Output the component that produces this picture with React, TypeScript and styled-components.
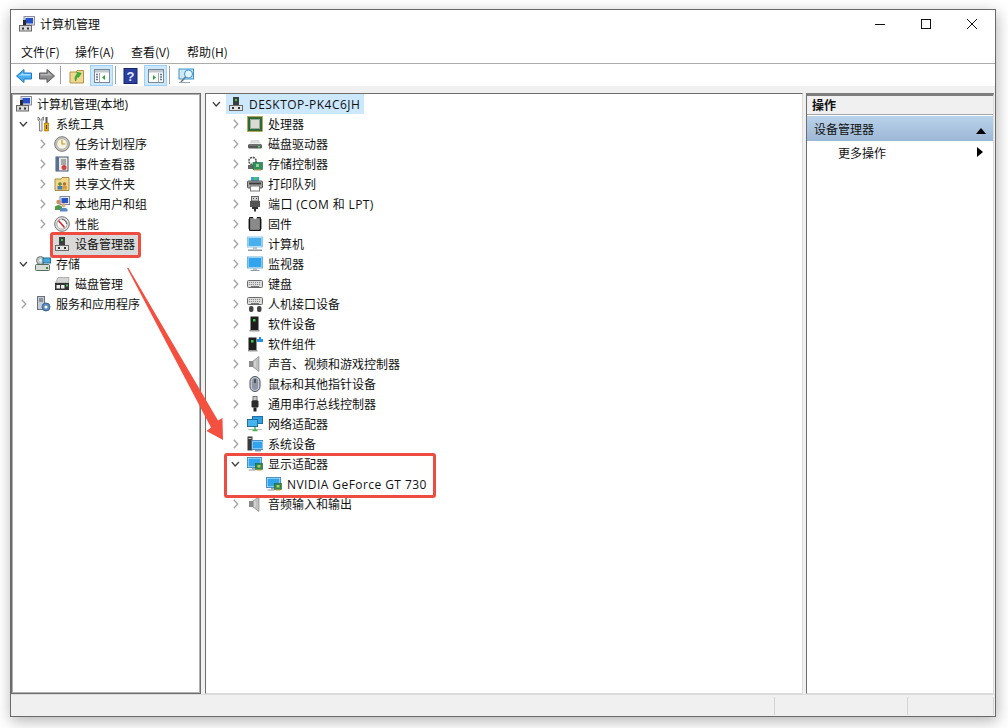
import React from "react";
import styled, { createGlobalStyle } from "styled-components";

const Global = createGlobalStyle`
  html, body { margin: 0; padding: 0; background: #fff; overflow: hidden; }
  body { font-family: "Noto Sans CJK SC", "Noto Sans", sans-serif; font-size: 12px; color: #111; }
`;

const Page = styled.div`
  position: relative;
  width: 1008px;
  height: 728px;
  padding: 9px 12px 11px 10px;
  box-sizing: border-box;
`;
const Win = styled.div`
  width: 100%;
  height: 100%;
  box-sizing: border-box;
  border: 1px solid #6a6a6a;
  background: #fff;
  display: flex;
  flex-direction: column;
  box-shadow: 1px 4px 14px rgba(0, 0, 0, 0.3);
`;
const TitleBar = styled.div`
  height: 28px;
  flex: none;
  display: flex;
  align-items: center;
  padding-left: 8px;
  box-sizing: border-box;
  gap: 5px;
`;
const TitleText = styled.span`
  flex: 1;
  line-height: 16px;
`;
const WinBtn = styled.div`
  width: 46px;
  height: 20px;
  display: flex;
  align-items: center;
  justify-content: center;
`;
const WinBtns = styled.div`
  display: flex;
`;
const MenuBar = styled.div`
  flex: none;
  height: 26px;
  box-sizing: border-box;
  border-bottom: 1px solid #ababab;
  display: flex;
  padding: 2px 0 0 10px;
  align-items: center;
`;
const MenuItem = styled.span<{ $w: number }>`
  width: ${(p) => p.$w}px;
  line-height: 16px;
`;
const ToolBar = styled.div`
  flex: none;
  height: 22px;
  display: flex;
  align-items: flex-end;
  padding-left: 1px;
`;
const ToolBtn = styled.div<{ $w?: number; $active?: boolean }>`
  width: ${(p) => p.$w ?? 23}px;
  height: 21px;
  box-sizing: border-box;
  display: flex;
  align-items: center;
  justify-content: center;
  background: ${(p) => (p.$active ? "#cce8ff" : "transparent")};
  border: 1px solid ${(p) => (p.$active ? "#99d1ff" : "transparent")};
`;
const ToolSep = styled.div`
  width: 1px;
  height: 18px;
  background: #a0a0a0;
  margin: 0 2px 2px;
`;
const Panes = styled.div`
  flex: 1;
  min-height: 0;
  background: #f0f0f0;
  padding: 7px 1px 0 0;
  display: flex;
`;
const LeftPane = styled.div`
  width: 190px;
  flex: none;
  box-sizing: border-box;
  background: #fff;
  border: 1px solid #6e6e6e;
  outline: 1px solid #b0b0b0;
  outline-offset: -2px;
`;
const CenterPane = styled.div`
  width: 598px;
  flex: none;
  margin-left: 4px;
  box-sizing: border-box;
  background: #fff;
  border-style: solid;
  border-width: 1px;
  border-color: #6e6e6e #dcdcdc #dcdcdc #6e6e6e;
`;
const RightPane = styled.div`
  flex: 1;
  margin-left: 3px;
  box-sizing: border-box;
  background: #fff;
  border-style: solid;
  border-width: 3px 1px 1px 1px;
  border-color: #7d7d7d #dcdcdc #dcdcdc #6e6e6e;
`;
const Row = styled.div<{ $indent: number }>`
  height: 20px;
  display: flex;
  align-items: center;
  padding-left: ${(p) => p.$indent}px;
  white-space: nowrap;
`;
const Slot = styled.span`
  width: 17px;
  height: 16px;
  flex: none;
  display: flex;
  align-items: center;
`;
const RowLabel = styled.span<{ $spacing?: number }>`
  margin-left: 5px;
  padding-top: 2px;
  line-height: 16px;
  font-family: "Open Sans", "Noto Sans CJK SC", sans-serif;
  letter-spacing: ${(p) => p.$spacing ?? 0}px;
`;
const RootHighlight = styled.span`
  display: flex;
  align-items: center;
  height: 20px;
  background: #cce8ff;
  padding: 0 4px 0 2px;
  margin-left: -2px;
`;
const Grey = styled.span`
  display: flex;
  align-items: center;
  height: 22px;
  background: #d9d9d9;
  padding: 0 4px 0 2px;
  margin-left: -2px;
`;
const ActHead = styled.div`
  height: 19px;
  box-sizing: border-box;
  background: #f0f0f0;
  border-bottom: 1px solid #a8a8a8;
  font-weight: 700;
  padding-left: 5px;
  line-height: 18px;
`;
const ActSel = styled.div`
  height: 25px;
  margin-top: 1px;
  background: linear-gradient(#bad2ea, #9cb7d5);
  display: flex;
  align-items: center;
  justify-content: space-between;
  padding: 0 7px;
`;
const ActItem = styled.div`
  height: 24px;
  display: flex;
  align-items: center;
  justify-content: space-between;
  padding: 0 8px 2px 31px;
  box-sizing: border-box;
`;
const Status = styled.div`
  height: 22px;
  flex: none;
  box-sizing: border-box;
  background: #f0f0f0;
  border-top: 1px solid #dcdcdc;
  display: flex;
  justify-content: flex-end;
  padding: 2px 1px 1px 0;
`;
const StatusCell = styled.div<{ $w: number }>`
  width: ${(p) => p.$w}px;
  border-right: 1px solid #d4d4d4;
  box-sizing: border-box;
`;
const Callout = styled.div<{ $x: number; $y: number; $w: number; $h: number }>`
  position: absolute;
  left: ${(p) => p.$x}px;
  top: ${(p) => p.$y}px;
  width: ${(p) => p.$w}px;
  height: ${(p) => p.$h}px;
  box-sizing: border-box;
  border: 3px solid #ee4c40;
  border-radius: 3px;
  pointer-events: none;
`;
const ArrowSvg = styled.svg`
  position: absolute;
  left: 0;
  top: 0;
  pointer-events: none;
`;
const Svg = styled.svg<{ $s?: number }>`
  width: ${(p) => p.$s ?? 16}px;
  height: ${(p) => p.$s ?? 16}px;
  flex: none;
  display: block;
`;

const Tower = () => (
  <>
    <rect x="5" y="1" width="6" height="8" fill="#3e3e3e" />
    <rect x="7" y="3" width="2" height="2" fill="#35d04a" />
    <rect x="1.5" y="9.5" width="13" height="5" fill="#e4e4e4" stroke="#6a6a6a" />
    <rect x="4" y="11" width="2" height="2" fill="#333" />
    <rect x="10" y="11" width="2" height="2" fill="#333" />
  </>
);
const Card = ({ x = 8, y = 8 }: { x?: number; y?: number }) => (
  <>
    <rect x={x} y={y} width="7" height="6" fill="#2f8a4a" stroke="#1f5f33" strokeWidth=".6" />
    <rect x={x + 2} y={y + 1.5} width="3" height="2.5" fill="#b6c66a" />
    <rect x={x + 1} y={y + 6} width="5" height="1" fill="#c8a030" />
  </>
);
const Speaker = () => (
  <>
    <rect x="2" y="5" width="4" height="6" fill="#8a8a8a" />
    <path d="M6 5 L12 0.5 V15.5 L6 11 Z" fill="#c0c0c0" stroke="#7c7c7c" strokeWidth=".6" />
    <path d="M8 5 V11" stroke="#e4e4e4" />
  </>
);
const Keys = ({ y = 4 }: { y?: number }) => (
  <>
    <rect x=".5" y={y + 0.5} width="15" height="7" rx="1" fill="#dcdcdc" stroke="#6a6a6a" />
    <path d={`M2 ${y + 2.5}h12M2 ${y + 4.5}h12`} stroke="#8b8b8b" strokeDasharray="1 1" />
    <rect x="4" y={y + 6} width="8" height="1" fill="#777" />
  </>
);

const shapes: Record<string, React.ReactNode> = {
  mgmt: (
    <>
      <rect x="5" y="0.5" width="10.5" height="8.5" fill="#e6e6ee" stroke="#8c8ca0" />
      <rect x="6.5" y="2" width="7.5" height="5.5" fill="#2450c8" />
      <rect x="4" y="4" width="3" height="5" fill="#2a2a2a" />
      <rect x="0.5" y="9.5" width="12" height="5.5" fill="#dadada" stroke="#666" />
      <rect x="3" y="11.5" width="2" height="2" fill="#333" />
      <rect x="8" y="11.5" width="2" height="2" fill="#333" />
    </>
  ),
  tools: (
    <>
      <path d="M3 1 V4 L4.5 5.5 V15 H7 V5.5 L8.5 4 V1 L7 2 V4 H4.5 V2 Z" fill="#f0f0f0" stroke="#666" strokeWidth=".8" />
      <rect x="10.5" y="1" width="2" height="6" fill="#555" />
      <path d="M9.5 7 H13.5 V15 H9.5 Z" fill="#e8a808" stroke="#9a6c00" strokeWidth=".6" />
      <rect x="11" y="9" width="1" height="4" fill="#5a3c00" />
    </>
  ),
  clock: (
    <>
      <circle cx="8" cy="8" r="7.3" fill="#d8d4c4" stroke="#707070" />
      <circle cx="8" cy="8" r="5.4" fill="#f8f4e4" stroke="#a8a8a8" />
      <path d="M8 4 V8 H11.5" fill="none" stroke="#c89818" strokeWidth="1.2" />
    </>
  ),
  event: (
    <>
      <rect x="2" y="1" width="12" height="14" fill="#e8e8e0" stroke="#46587a" />
      <rect x="2" y="1" width="3" height="14" fill="#5a6e96" />
      <path d="M7 4h5M7 6h5M7 8h5" stroke="#666" />
      <circle cx="10" cy="11.5" r="2.5" fill="#d64040" />
    </>
  ),
  share: (
    <>
      <path d="M1 3 H7 L8 1.5 H15 V14.5 H1 Z" fill="#f0d88a" stroke="#a88c40" />
      <circle cx="6" cy="8" r="1.8" fill="#5a8a3a" />
      <rect x="3.5" y="10" width="5" height="3.5" fill="#4a7ab8" />
      <circle cx="10.5" cy="8" r="1.8" fill="#b86a3a" />
      <rect x="8.5" y="10" width="4.5" height="3.5" fill="#d8a040" />
    </>
  ),
  users: (
    <>
      <rect x="6" y="0.5" width="9.5" height="8" fill="#e8e8f0" stroke="#8888a0" />
      <rect x="7.5" y="2" width="6.5" height="5" fill="#2858c8" />
      <circle cx="4.5" cy="6" r="2.2" fill="#c89060" />
      <path d="M1 14 V10.5 Q4.5 7.5 8 10.5 V14 Z" fill="#4f9a4a" />
      <circle cx="9.5" cy="9" r="2" fill="#d8a878" />
      <path d="M6 15.5 V13 Q9.5 10.5 13.5 13 V15.5 Z" fill="#5a8ac0" />
    </>
  ),
  perf: (
    <>
      <circle cx="8" cy="8" r="7.3" fill="#ececec" stroke="#707070" />
      <circle cx="8" cy="8" r="5.2" fill="#fff" stroke="#a0a0a0" />
      <path d="M4.5 4.5 L10.5 11.5" stroke="#d02020" strokeWidth="1.5" />
      <path d="M8 3.5 A4.5 4.5 0 0 1 12.5 8" fill="none" stroke="#555" />
    </>
  ),
  dev: <Tower />,
  storage: (
    <>
      <circle cx="5.5" cy="4.5" r="4" fill="#c0c8c8" stroke="#707878" />
      <circle cx="5.5" cy="4.5" r="1.2" fill="#f4f4f4" />
      <rect x="8" y="2" width="7.5" height="5" fill="#48a8d8" stroke="#207098" />
      <rect x="0.5" y="8.5" width="14" height="6" rx="1" fill="#d8dcd8" stroke="#5a6a5a" />
      <rect x="11" y="11" width="2" height="2" fill="#3a8a3a" />
    </>
  ),
  disk: (
    <>
      <path d="M1.5 7 L4 1.5 H15 L14.5 7 Z" fill="#d4d4d4" stroke="#8a8a8a" strokeWidth=".6" />
      <rect x="1" y="7" width="14" height="7" fill="#333" />
      <rect x="2.5" y="9" width="3.5" height="3.5" fill="#eee" />
      <rect x="7" y="9" width="3.5" height="3.5" fill="#eee" />
      <rect x="12" y="8.5" width="2" height="2" fill="#40d060" />
    </>
  ),
  service: (
    <>
      <rect x="2.5" y="0.5" width="7" height="13" fill="#c8ccd4" stroke="#68707c" />
      <path d="M4 3h4M4 5h4" stroke="#556" />
      <circle cx="11" cy="11" r="4" fill="#5a8ac0" stroke="#3a6898" />
      <circle cx="11" cy="11" r="1.5" fill="#fff" />
    </>
  ),
  cpu: (
    <>
      <rect x="0.5" y="0.5" width="15" height="15" fill="#2f6a3a" stroke="#c8a030" strokeDasharray="1 .6" />
      <rect x="1.5" y="1.5" width="13" height="13" fill="#2f6a3a" />
      <rect x="3.5" y="3.5" width="9" height="9" fill="#d8dcd4" stroke="#9aa89a" />
    </>
  ),
  drive: (
    <>
      <path d="M2.5 7.5 L4 4 H12 L13.5 7.5 Z" fill="#dcdcdc" />
      <rect x="1" y="8" width="14" height="4.5" rx="1.5" fill="#555" />
      <rect x="2" y="8.5" width="12" height="1" fill="#909090" />
      <rect x="11" y="10" width="2" height="1.5" fill="#40e060" />
    </>
  ),
  sctrl: (
    <>
      <circle cx="5.5" cy="5" r="3.6" fill="none" stroke="#555" strokeWidth="1.6" strokeDasharray="2 .8" />
      <rect x="1" y="9" width="5" height="4" fill="#666" />
      <rect x="6" y="6.5" width="9.5" height="7" fill="#2f9060" stroke="#1f6040" strokeWidth=".6" />
      <rect x="9" y="8" width="3" height="3" fill="#a0d090" />
      <rect x="7" y="13.5" width="7" height="1" fill="#c8a030" />
    </>
  ),
  printer: (
    <>
      <rect x="4" y="1" width="8" height="4" fill="#38a0e0" />
      <rect x="7" y="1" width="3" height="3" fill="#50c060" />
      <rect x="0.5" y="5" width="15" height="7" rx="1" fill="#a8a8a8" stroke="#555" />
      <rect x="2" y="6.5" width="12" height="2" fill="#3a3a3a" />
      <rect x="3.5" y="10" width="9" height="5" fill="#fff" stroke="#777" />
    </>
  ),
  port: (
    <>
      <rect x="4.5" y="0.5" width="7" height="4.5" fill="#d0d0d0" stroke="#666" />
      <rect x="6" y="2" width="1" height="1" fill="#444" />
      <rect x="9" y="2" width="1" height="1" fill="#444" />
      <rect x="3" y="5" width="10" height="6" fill="#555" />
      <path d="M5 11 H11 V13 H9 V15.5 H7 V13 H5 Z" fill="#333" />
    </>
  ),
  chip: (
    <>
      <rect x="2" y="1" width="12" height="14" rx="1" fill="#161616" />
      <rect x="3.5" y="2.5" width="9" height="11" fill="#8a8a8a" stroke="#c0c0c0" strokeWidth=".4" />
      <path d="M6 1 A2 2 0 0 0 10 1" fill="#fff" />
      <path d="M2 4h-1M2 6h-1M2 8h-1M2 10h-1M2 12h-1M15 4h-1M15 6h-1M15 8h-1M15 10h-1M15 12h-1" stroke="#333" />
    </>
  ),
  pc: (
    <>
      <rect x="0.5" y="1" width="15" height="10" fill="#d8ecf8" stroke="#8ec8ec" />
      <rect x="1.5" y="2" width="13" height="8" fill="#48b0ec" />
      <rect x="6" y="11" width="4" height="2" fill="#b8c4cc" />
      <rect x="1" y="13.5" width="14" height="1.5" fill="#8a9aa8" />
    </>
  ),
  monitor: (
    <>
      <rect x="0.5" y="1" width="15" height="11" fill="#d8ecf8" stroke="#68b4e0" />
      <rect x="1.5" y="2" width="13" height="9" fill="#30a4ec" />
      <rect x="6" y="12" width="4" height="2" fill="#b8c4cc" />
      <rect x="3.5" y="14" width="9" height="1" fill="#8a9aa8" />
    </>
  ),
  keyboard: <Keys />,
  hid: (
    <>
      <Keys y={1} />
      <rect x="2" y="10" width="4.5" height="6" rx="2" fill="#444" />
      <rect x="10" y="10" width="4.5" height="6" rx="2" fill="#444" />
    </>
  ),
  soft: (
    <>
      <rect x="3.5" y="0.5" width="8" height="13.5" fill="#1e1e1e" />
      <rect x="6" y="3" width="2.5" height="2.5" fill="#35d04a" />
      <rect x="2.5" y="14" width="10" height="1.5" fill="#999" />
    </>
  ),
  softc: (
    <>
      <rect x="1.5" y="1.5" width="8" height="12.5" fill="#1e1e1e" />
      <rect x="4" y="4" width="2.5" height="2.5" fill="#35d04a" />
      <rect x="1" y="14" width="9.5" height="1.5" fill="#999" />
      <path d="M10 3 H12 V1 H14 V3 H16 V6 H10 Z" fill="#2a90e0" />
    </>
  ),
  sound: <Speaker />,
  mouse: (
    <>
      <rect x="3" y="0.5" width="10" height="15" rx="5" fill="#c4ccd8" stroke="#4a4e58" />
      <rect x="5" y="2" width="6" height="12" rx="3" fill="#8e96a4" />
      <rect x="7.3" y="3" width="1.4" height="4" fill="#333" />
    </>
  ),
  usb: (
    <>
      <rect x="6" y="0.5" width="4" height="4" fill="#c8c8c8" stroke="#777" />
      <rect x="4.5" y="4.5" width="7" height="7" rx="1" fill="#2c2c2c" />
      <rect x="6.5" y="11.5" width="3" height="4" fill="#222" />
    </>
  ),
  net: (
    <>
      <rect x="5.5" y="0.5" width="10" height="7" fill="#30a0e0" stroke="#1f6fa8" />
      <rect x="0.5" y="3.5" width="10" height="7" fill="#48b4ec" stroke="#1f6fa8" />
      <rect x="1" y="13" width="14" height="1" fill="#b0c0b0" />
      <path d="M8 11 V14.5 M5.5 14.5 H10.5" stroke="#40b050" strokeWidth="1.4" />
    </>
  ),
  sys: (
    <>
      <rect x="0.5" y="0.5" width="5" height="14" fill="#3a3a3a" />
      <rect x="1.5" y="2" width="3" height="1" fill="#ccc" />
      <rect x="5" y="4.5" width="11" height="9" fill="#d8ecf8" stroke="#4a90c8" />
      <rect x="6" y="5.5" width="9" height="7" fill="#30a4ec" />
      <rect x="8" y="14" width="6" height="1.5" fill="#8a9aa8" />
    </>
  ),
  display: (
    <>
      <rect x="0.5" y="1.5" width="14" height="10" fill="#d8ecf8" stroke="#4a94c4" />
      <rect x="1.5" y="2.5" width="12" height="8" fill="#30a4ec" />
      <rect x="5" y="12" width="3" height="1.5" fill="#9aa8b4" />
      <rect x="1.5" y="13.5" width="7" height="1" fill="#8a9aa8" />
      <Card x={8.5} y={7.5} />
    </>
  ),
  back: (
    <>
      <path d="M0.5 8 L8 1.5 V5 H15.5 V11 H8 V14.5 Z" fill="#48aef0" stroke="#1c78c8" />
      <path d="M3 8 L7 4.8 V6 H14.5 V7.5 H5 Z" fill="#a8dcfc" />
    </>
  ),
  fwd: (
    <>
      <path d="M15.5 8 L8 1.5 V5 H0.5 V11 H8 V14.5 Z" fill="#8c8c8c" stroke="#5c5c5c" />
      <path d="M1.5 6 H9 V4 L13 7.5 H1.5 Z" fill="#b8b8b8" />
    </>
  ),
  up: (
    <>
      <path d="M1 4 H7 L8 2.5 H14.5 V15 H1 Z" fill="#f0d890" stroke="#b09448" />
      <path d="M5 12 Q5 7 9 6 V4 L13 6.5 L9 9.5 V8 Q7 9 5 12 Z" fill="#3cb83c" stroke="#1f8a1f" strokeWidth=".5" transform="rotate(-20 9 8)" />
    </>
  ),
  paneL: (
    <>
      <rect x="0.5" y="1.5" width="15" height="13" fill="#fff" stroke="#7c8894" />
      <rect x="1" y="2" width="14" height="2.5" fill="#c0c8d0" />
      <path d="M2 6.5h2M2 9h2M2 11.5h2" stroke="#5c7890" strokeWidth="1.4" />
      <path d="M5.5 5 V14" stroke="#a0a8b0" />
      <path d="M11 7 L8 9.5 L11 12 Z" fill="#28a838" />
    </>
  ),
  paneR: (
    <>
      <rect x="0.5" y="1.5" width="15" height="13" fill="#fff" stroke="#7c8894" />
      <rect x="1" y="2" width="14" height="2.5" fill="#c0c8d0" />
      <path d="M12 6.5h2M12 9h2M12 11.5h2" stroke="#5c7890" strokeWidth="1.4" />
      <path d="M10.5 5 V14" stroke="#a0a8b0" />
      <path d="M5 7 L8 9.5 L5 12 Z" fill="#28a838" />
    </>
  ),
  help: (
    <>
      <rect x="1" y="0.5" width="13" height="15" fill="#2a3f9e" stroke="#16246a" />
      <text x="7.5" y="13" fontSize="13" fontWeight="700" fill="#e4e8ff" textAnchor="middle" fontFamily="Liberation Sans, sans-serif">?</text>
    </>
  ),
  view: (
    <>
      <rect x="1" y="1" width="14.5" height="10" fill="#cde6f8" stroke="#3a94cc" />
      <circle cx="10.5" cy="6" r="4" fill="#e4f4fc" stroke="#3a94cc" />
      <path d="M7.5 9 L3 14" stroke="#6a7a88" strokeWidth="1.6" />
      <path d="M1 14.5 H12" stroke="#9aa8b4" />
    </>
  ),
};

const Icon = ({ name, size }: { name: string; size?: number }) => (
  <Svg viewBox="0 0 16 16" $s={size}>
    {shapes[name]}
  </Svg>
);

const Chevron = ({ open }: { open?: boolean }) =>
  open ? (
    <Svg viewBox="0 0 17 16">
      <path d="M2 6 L5.5 10 L9.5 6" fill="none" stroke="#404040" strokeWidth="1.5" />
    </Svg>
  ) : (
    <Svg viewBox="0 0 17 16">
      <path d="M4 3.5 L8.2 8 L4 12.5" fill="none" stroke="#a6a6a6" strokeWidth="1.5" />
    </Svg>
  );

type Exp = "open" | "closed" | "none";
const TreeRow = ({ indent, exp, icon, label, noSlot, spacing }: { indent: number; exp: Exp; icon: string; label: string; noSlot?: boolean; spacing?: number }) => (
  <Row $indent={indent}>
    {!noSlot && <Slot>{exp !== "none" && <Chevron open={exp === "open"} />}</Slot>}
    <Icon name={icon} />
    <RowLabel $spacing={spacing}>{label}</RowLabel>
  </Row>
);

const leftTree: { i: number; e: Exp; icon: string; t: string }[] = [
  { i: 6, e: "open", icon: "tools", t: "系统工具" },
  { i: 25, e: "closed", icon: "clock", t: "任务计划程序" },
  { i: 25, e: "closed", icon: "event", t: "事件查看器" },
  { i: 25, e: "closed", icon: "share", t: "共享文件夹" },
  { i: 25, e: "closed", icon: "users", t: "本地用户和组" },
  { i: 25, e: "closed", icon: "perf", t: "性能" },
];
const leftTree2: { i: number; e: Exp; icon: string; t: string }[] = [
  { i: 6, e: "open", icon: "storage", t: "存储" },
  { i: 25, e: "none", icon: "disk", t: "磁盘管理" },
  { i: 6, e: "closed", icon: "service", t: "服务和应用程序" },
];
const centerTree: [string, string, number?][] = [
  ["cpu", "处理器"],
  ["drive", "磁盘驱动器"],
  ["sctrl", "存储控制器"],
  ["printer", "打印队列"],
  ["port", "端口 (COM 和 LPT)", 0.4],
  ["chip", "固件"],
  ["pc", "计算机"],
  ["monitor", "监视器"],
  ["keyboard", "键盘"],
  ["hid", "人机接口设备"],
  ["soft", "软件设备"],
  ["softc", "软件组件"],
  ["sound", "声音、视频和游戏控制器"],
  ["mouse", "鼠标和其他指针设备"],
  ["usb", "通用串行总线控制器"],
  ["net", "网络适配器"],
  ["sys", "系统设备"],
];

export default function App() {
  return (
    <Page>
      <Global />
      <Win>
        <TitleBar>
          <Icon name="mgmt" />
          <TitleText>计算机管理</TitleText>
          <WinBtns>
            <WinBtn>
              <Svg viewBox="0 0 12 12" $s={12}><path d="M1 6.5 H11" stroke="#111" /></Svg>
            </WinBtn>
            <WinBtn>
              <Svg viewBox="0 0 12 12" $s={12}><rect x="1.5" y="1.5" width="9" height="9" fill="none" stroke="#111" /></Svg>
            </WinBtn>
            <WinBtn>
              <Svg viewBox="0 0 12 12" $s={12}><path d="M1 1 L11 11 M11 1 L1 11" stroke="#111" /></Svg>
            </WinBtn>
          </WinBtns>
        </TitleBar>
        <MenuBar>
          <MenuItem $w={54}>文件(F)</MenuItem>
          <MenuItem $w={56}>操作(A)</MenuItem>
          <MenuItem $w={56}>查看(V)</MenuItem>
          <MenuItem $w={60}>帮助(H)</MenuItem>
        </MenuBar>
        <ToolBar>
          <ToolBtn><Icon name="back" /></ToolBtn>
          <ToolBtn><Icon name="fwd" /></ToolBtn>
          <ToolSep />
          <ToolBtn $w={27}><Icon name="up" /></ToolBtn>
          <ToolBtn $active><Icon name="paneL" /></ToolBtn>
          <ToolSep />
          <ToolBtn $w={26}><Icon name="help" /></ToolBtn>
          <ToolBtn $active><Icon name="paneR" /></ToolBtn>
          <ToolSep />
          <ToolBtn $w={28}><Icon name="view" /></ToolBtn>
        </ToolBar>
        <Panes>
          <LeftPane>
            <TreeRow noSlot indent={4} exp="none" icon="mgmt" label="计算机管理(本地)" />
            {leftTree.map((r) => (
              <TreeRow key={r.t} indent={r.i} exp={r.e} icon={r.icon} label={r.t} />
            ))}
            <Row $indent={25}>
              <Slot />
              <Grey>
                <Icon name="dev" />
                <RowLabel>设备管理器</RowLabel>
              </Grey>
            </Row>
            {leftTree2.map((r) => (
              <TreeRow key={r.t} indent={r.i} exp={r.e} icon={r.icon} label={r.t} />
            ))}
          </LeftPane>
          <CenterPane>
            <Row $indent={5}>
              <Slot><Chevron open /></Slot>
              <RootHighlight>
                <Icon name="dev" />
                <RowLabel $spacing={0.47}>DESKTOP-PK4C6JH</RowLabel>
              </RootHighlight>
            </Row>
            {centerTree.map(([icon, t, sp]) => (
              <TreeRow key={t} indent={24} exp="closed" icon={icon} label={t} spacing={sp} />
            ))}
            <TreeRow indent={24} exp="open" icon="display" label="显示适配器" />
            <TreeRow indent={43} exp="none" icon="display" label="NVIDIA GeForce GT 730" spacing={0.43} />
            <TreeRow indent={24} exp="closed" icon="sound" label="音频输入和输出" />
          </CenterPane>
          <RightPane>
            <ActHead>操作</ActHead>
            <ActSel>
              <span>设备管理器</span>
              <Svg viewBox="0 0 10 6" $s={10}><path d="M0 8 L5 2 L10 8 Z" fill="#000" /></Svg>
            </ActSel>
            <ActItem>
              <span>更多操作</span>
              <Svg viewBox="0 0 6 10" $s={10}><path d="M0 0 L6 5 L0 10 Z" fill="#000" /></Svg>
            </ActItem>
          </RightPane>
        </Panes>
        <Status>
          <StatusCell $w={1} />
          <StatusCell $w={133} />
          <StatusCell $w={86} />
        </Status>
      </Win>
      <Callout $x={50} $y={232} $w={91} $h={26} />
      <Callout $x={224} $y={453} $w={212} $h={45} />
      <ArrowSvg width="1008" height="728" viewBox="0 0 1008 728">
        <path d="M127 268 L128.5 268 L218 420.5 L222.5 418 L223 440 L206.5 431 L211 427.5 Z" fill="#f4503f" />
      </ArrowSvg>
    </Page>
  );
}
